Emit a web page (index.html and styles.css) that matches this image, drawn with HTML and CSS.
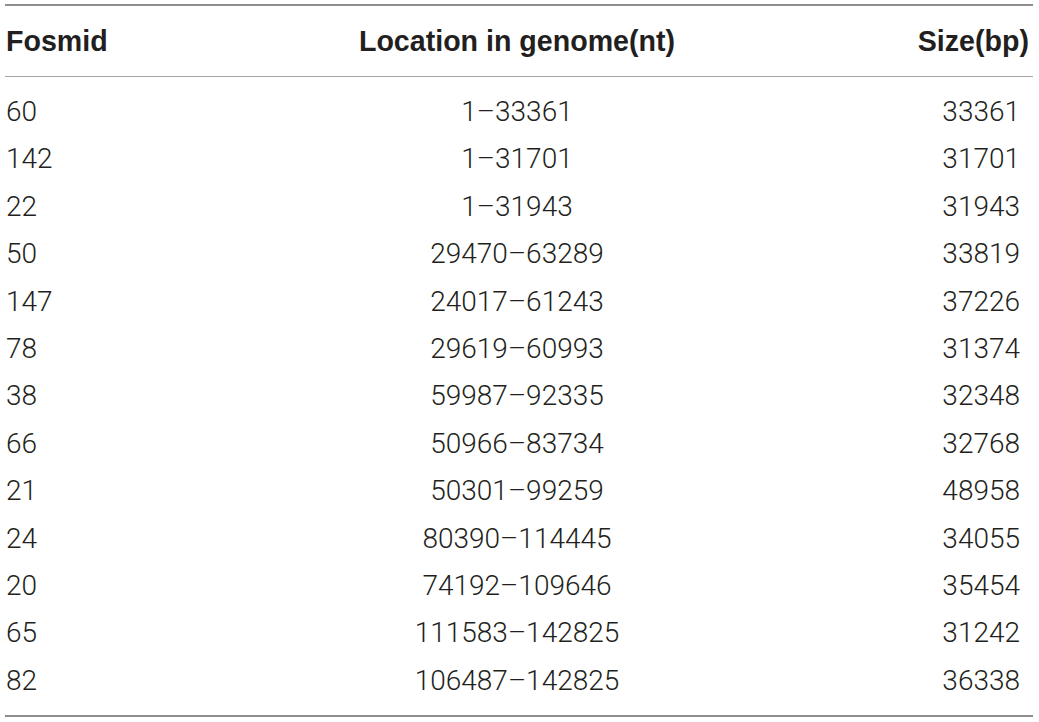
FILE: index.html
```html
<!DOCTYPE html>
<html>
<head>
<meta charset="utf-8">
<link rel="stylesheet" href="styles.css">
</head>
<body>
<div class="table">
  <div class="row head">
    <div class="c1">Fosmid</div>
    <div class="c2">Location in genome(nt)</div>
    <div class="c3">Size(bp)</div>
  </div>
  <div class="body">
    <div class="row"><div class="c1">60</div><div class="c2">1–33361</div><div class="c3">33361</div></div>
    <div class="row"><div class="c1">142</div><div class="c2">1–31701</div><div class="c3">31701</div></div>
    <div class="row"><div class="c1">22</div><div class="c2">1–31943</div><div class="c3">31943</div></div>
    <div class="row"><div class="c1">50</div><div class="c2">29470–63289</div><div class="c3">33819</div></div>
    <div class="row"><div class="c1">147</div><div class="c2">24017–61243</div><div class="c3">37226</div></div>
    <div class="row"><div class="c1">78</div><div class="c2">29619–60993</div><div class="c3">31374</div></div>
    <div class="row"><div class="c1">38</div><div class="c2">59987–92335</div><div class="c3">32348</div></div>
    <div class="row"><div class="c1">66</div><div class="c2">50966–83734</div><div class="c3">32768</div></div>
    <div class="row"><div class="c1">21</div><div class="c2">50301–99259</div><div class="c3">48958</div></div>
    <div class="row"><div class="c1">24</div><div class="c2">80390–114445</div><div class="c3">34055</div></div>
    <div class="row"><div class="c1">20</div><div class="c2">74192–109646</div><div class="c3">35454</div></div>
    <div class="row"><div class="c1">65</div><div class="c2">111583–142825</div><div class="c3">31242</div></div>
    <div class="row"><div class="c1">82</div><div class="c2">106487–142825</div><div class="c3">36338</div></div>
  </div>
</div>
</body>
</html>
```

FILE: styles.css
```css
html, body {
  margin: 0;
  padding: 0;
  background: #ffffff;
}

.table {
  margin: 4px 0 0 5px;
  width: 1028px;
  border-top: 2px solid #8e8e8e;
  border-bottom: 2px solid #8e8e8e;
  color: #231f20;
}

.row {
  display: grid;
  grid-template-columns: 340px 344px 1fr;
  align-items: center;
}

.head {
  height: 70px;
  border-bottom: 1px solid #a3a3a3;
  font-family: "Liberation Sans", Arial, sans-serif;
  font-weight: 700;
  font-size: 28.6px;
  line-height: 70px;
}

.head .c1 { padding-left: 1px; }
.head .c3 { padding-right: 4px; }

.body {
  padding: 11px 0;
  font-family: Roboto, "Liberation Sans", sans-serif;
  font-weight: 300;
  font-size: 28px;
}

.body .row {
  height: 47.4px;
  line-height: 47.4px;
}

.body .c1 { padding-left: 1px; }
.body .c3 { padding-right: 13px; }

.c1 { text-align: left; }
.c2 { text-align: center; }
.c3 { text-align: right; }
```
